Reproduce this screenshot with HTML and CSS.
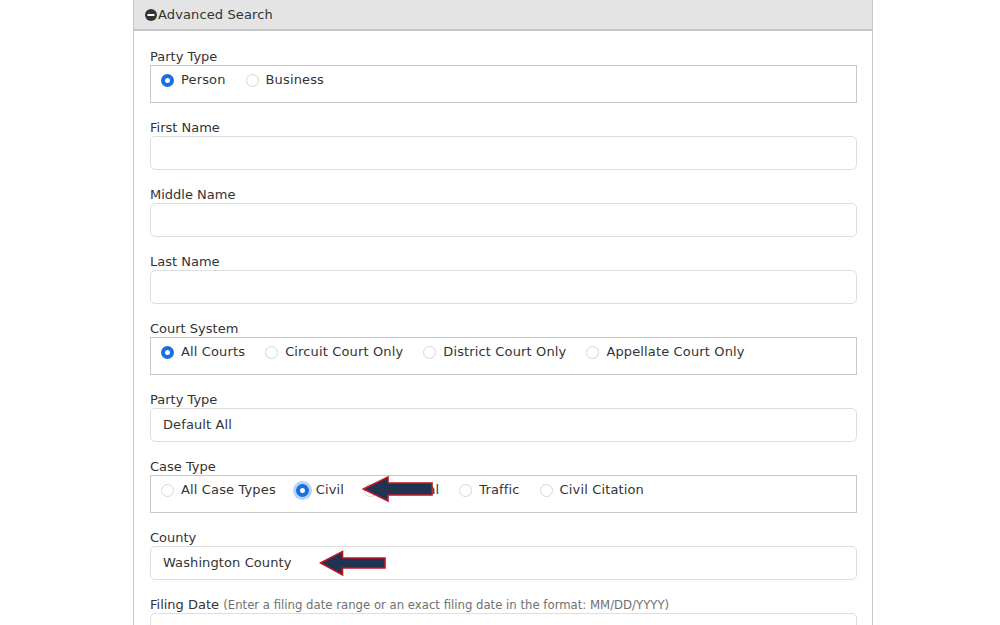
FILE: index.html
```html
<!DOCTYPE html>
<html>
<head>
<meta charset="utf-8">
<link rel="stylesheet" href="styles.css">
</head>
<body>
<div class="page">
  <div class="panel">
    <div class="panel-head">
      <svg class="toggle" width="12" height="12" viewBox="0 0 12 12"><circle cx="6" cy="6" r="6" fill="#333"/><rect x="2.5" y="5" width="7" height="2" fill="#fff"/></svg>
      <span>Advanced Search</span>
    </div>
    <div class="panel-body">
      <div class="group">
        <div class="label">Party Type</div>
        <div class="choices">
          <span class="opt"><span class="radio checked"></span>Person</span>
          <span class="opt"><span class="radio"></span>Business</span>
        </div>
      </div>
      <div class="group">
        <div class="label">First Name</div>
        <div class="input"></div>
      </div>
      <div class="group">
        <div class="label">Middle Name</div>
        <div class="input"></div>
      </div>
      <div class="group">
        <div class="label">Last Name</div>
        <div class="input"></div>
      </div>
      <div class="group">
        <div class="label">Court System</div>
        <div class="choices">
          <span class="opt"><span class="radio checked"></span>All Courts</span>
          <span class="opt"><span class="radio"></span>Circuit Court Only</span>
          <span class="opt"><span class="radio"></span>District Court Only</span>
          <span class="opt"><span class="radio"></span>Appellate Court Only</span>
        </div>
      </div>
      <div class="group">
        <div class="label">Party Type</div>
        <div class="input">Default All</div>
      </div>
      <div class="group">
        <div class="label">Case Type</div>
        <div class="choices">
          <span class="opt"><span class="radio"></span>All Case Types</span>
          <span class="opt"><span class="radio checked focus"></span>Civil</span>
          <span class="opt"><span class="radio"></span>Criminal</span>
          <span class="opt"><span class="radio"></span>Traffic</span>
          <span class="opt"><span class="radio"></span>Civil Citation</span>
        </div>
      </div>
      <div class="group">
        <div class="label">County</div>
        <div class="input">Washington County</div>
      </div>
      <div class="group">
        <div class="label">Filing Date <span class="note">(Enter a filing date range or an exact filing date in the format: MM/DD/YYYY)</span></div>
        <div class="input"></div>
      </div>
    </div>
  </div>
  <svg class="arrow arrow-civil" width="74" height="30" viewBox="0 0 74 30"><polygon points="1.5,14 26,2 26,8 70,8 70,20 26,20 26,26" fill="#1f3352" stroke="#c0161e" stroke-width="1.6" stroke-linejoin="miter"/></svg>
  <svg class="arrow arrow-county" width="70" height="30" viewBox="0 0 70 30"><polygon points="1.5,13 23.5,1.5 23.5,8 66,8 66,18 23.5,18 23.5,25" fill="#1f3352" stroke="#c0161e" stroke-width="1.6" stroke-linejoin="miter"/></svg>
</div>
</body>
</html>
```
FILE: styles.css
```css
html, body {
  margin: 0;
  padding: 0;
  height: 100%;
  overflow: hidden;
  background: #fff;
}
.page {
  position: relative;
  font-family: "DejaVu Sans", Verdana, sans-serif;
  font-size: 13px;
  color: #333;
}
.panel {
  margin-left: 133px;
  width: 738px;
  border: 1px solid #c8c8c8;
  border-top: none;
}
.panel-head {
  display: flex;
  align-items: center;
  padding-left: 11px;
  padding-top: 1px;
  box-sizing: border-box;
  height: 31px;
  background: #e4e4e4;
  border-bottom: 2px solid #c6c6c6;
  line-height: 28px;
  letter-spacing: 0.12px;
}
.toggle {
  margin-right: 1px;
}
.panel-body {
  padding: 16px 15px 0 16px;
}
.group {
  margin-bottom: 15px;
}
.label {
  line-height: 20px;
  height: 18px;
  color: #333;
}
.note {
  color: #707070;
  font-size: 11.7px;
}
.input {
  box-sizing: border-box;
  height: 34px;
  border: 1px solid #dedede;
  border-radius: 5px;
  padding: 0 12px;
  line-height: 32px;
  color: #333;
  letter-spacing: 0.1px;
}
.choices {
  box-sizing: border-box;
  height: 38px;
  border: 1px solid #c8c8c8;
  padding: 5px 10px 0 10px;
  display: flex;
  align-items: flex-start;
  line-height: 18px;
}
.opt {
  display: flex;
  align-items: center;
  height: 18px;
  margin-right: 20px;
  color: #333;
  letter-spacing: 0.14px;
}
.radio {
  box-sizing: border-box;
  width: 13px;
  height: 13px;
  border-radius: 50%;
  border: 1px solid #d6d6d6;
  background: #fff;
  margin-right: 7px;
  margin-top: 1px;
}
.radio.checked {
  border: 4px solid #1a6fe0;
  background: #fff;
}
.radio.focus {
  box-shadow: 0 0 0 3px #b9d3f7;
}
.arrow {
  position: absolute;
}
.arrow-civil {
  left: 362px;
  top: 475px;
}
.arrow-county {
  left: 319px;
  top: 550px;
}
```
